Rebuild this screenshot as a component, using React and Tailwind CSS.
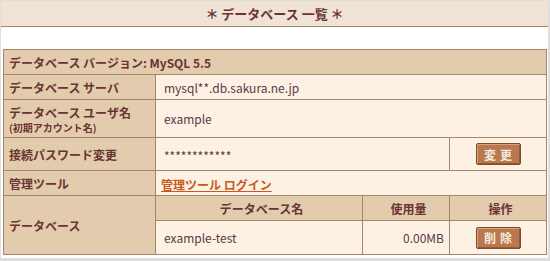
import React from "react";

function Btn({ label }) {
  return (
    <span className="inline-flex items-center justify-center w-[45px] h-[22px] bg-[#b9784d] border border-[#7d4b2b] rounded-[2px] shadow-[inset_1px_1px_0_#d9a27c,inset_-1px_-1px_0_#94592f] text-[#f6ebe0] text-[12px] font-bold tracking-[4px] pl-[4px]">
      {label}
    </span>
  );
}

export default function App() {
  const td = "border border-[#a5866b]";
  const lab = `${td} bg-[#e3cbad] text-[#6a3434] font-bold text-[12px] pl-[5px]`;
  const val = `${td} bg-[#fdf1e4] text-[#5b3846] text-[12px] pl-[8px]`;
  return (
    <div className="w-[550px] h-[261px] bg-[#dedede] pl-[1px] pt-[1px] pr-[2px] pb-[3px] font-['Noto_Sans_CJK_JP','Noto_Sans',sans-serif]">
      <div className="w-full h-full bg-white flex flex-col">
        <div className="h-[26px] shrink-0 bg-[#f0e3d4] border-b border-[#a5866b] flex items-center justify-center text-[#6a3434] text-[13px] font-bold">
          ＊ データベース 一覧 ＊
        </div>
        <div className="pt-[22px] pl-[2px] pr-[2px]">
          <table className="table-fixed border-collapse w-[543px] leading-tight">
            <colgroup>
              <col className="w-[152px]" />
              <col className="w-[207px]" />
              <col className="w-[87px]" />
              <col className="w-[97px]" />
            </colgroup>
            <tbody>
              <tr className="h-[25px]">
                <td colSpan={4} className={lab}>データベース バージョン: MySQL 5.5</td>
              </tr>
              <tr className="h-[25px]">
                <td className={lab}>データベース サーバ</td>
                <td colSpan={3} className={`${val} text-[11.5px]`}>mysql**.db.sakura.ne.jp</td>
              </tr>
              <tr className="h-[38px]">
                <td className={lab}>
                  <div className="leading-[17px]">データベース ユーザ名</div>
                  <div className="text-[10px] leading-[13px]">(初期アカウント名)</div>
                </td>
                <td colSpan={3} className={val}>example</td>
              </tr>
              <tr className="h-[33px]">
                <td className={lab}>接続パスワード変更</td>
                <td colSpan={2} className={`${val} pl-[5px] pt-[3px]`}>************</td>
                <td className={`${td} bg-[#fdf1e4] text-center`}>
                  <Btn label="変更" />
                </td>
              </tr>
              <tr className="h-[25px]">
                <td className={lab}>管理ツール</td>
                <td colSpan={3} className={`${td} bg-[#fdf1e4] pl-[5px]`}>
                  <a className="text-[#c8581e] underline font-bold text-[12px]">管理ツール ログイン</a>
                </td>
              </tr>
              <tr className="h-[25px]">
                <td rowSpan={2} className={lab}>データベース</td>
                <td className={`${lab} text-center pl-0`}>データベース名</td>
                <td className={`${lab} text-center pl-0`}>使用量</td>
                <td className={`${lab} text-center pl-0`}>操作</td>
              </tr>
              <tr className="h-[34px]">
                <td className={`${val} pl-[5px]`}>example-test</td>
                <td className={`${val} text-right pr-[5px] pl-0 text-[11.5px]`}>0.00MB</td>
                <td className={`${td} bg-[#fdf1e4] text-center`}>
                  <Btn label="削除" />
                </td>
              </tr>
            </tbody>
          </table>
        </div>
      </div>
    </div>
  );
}
